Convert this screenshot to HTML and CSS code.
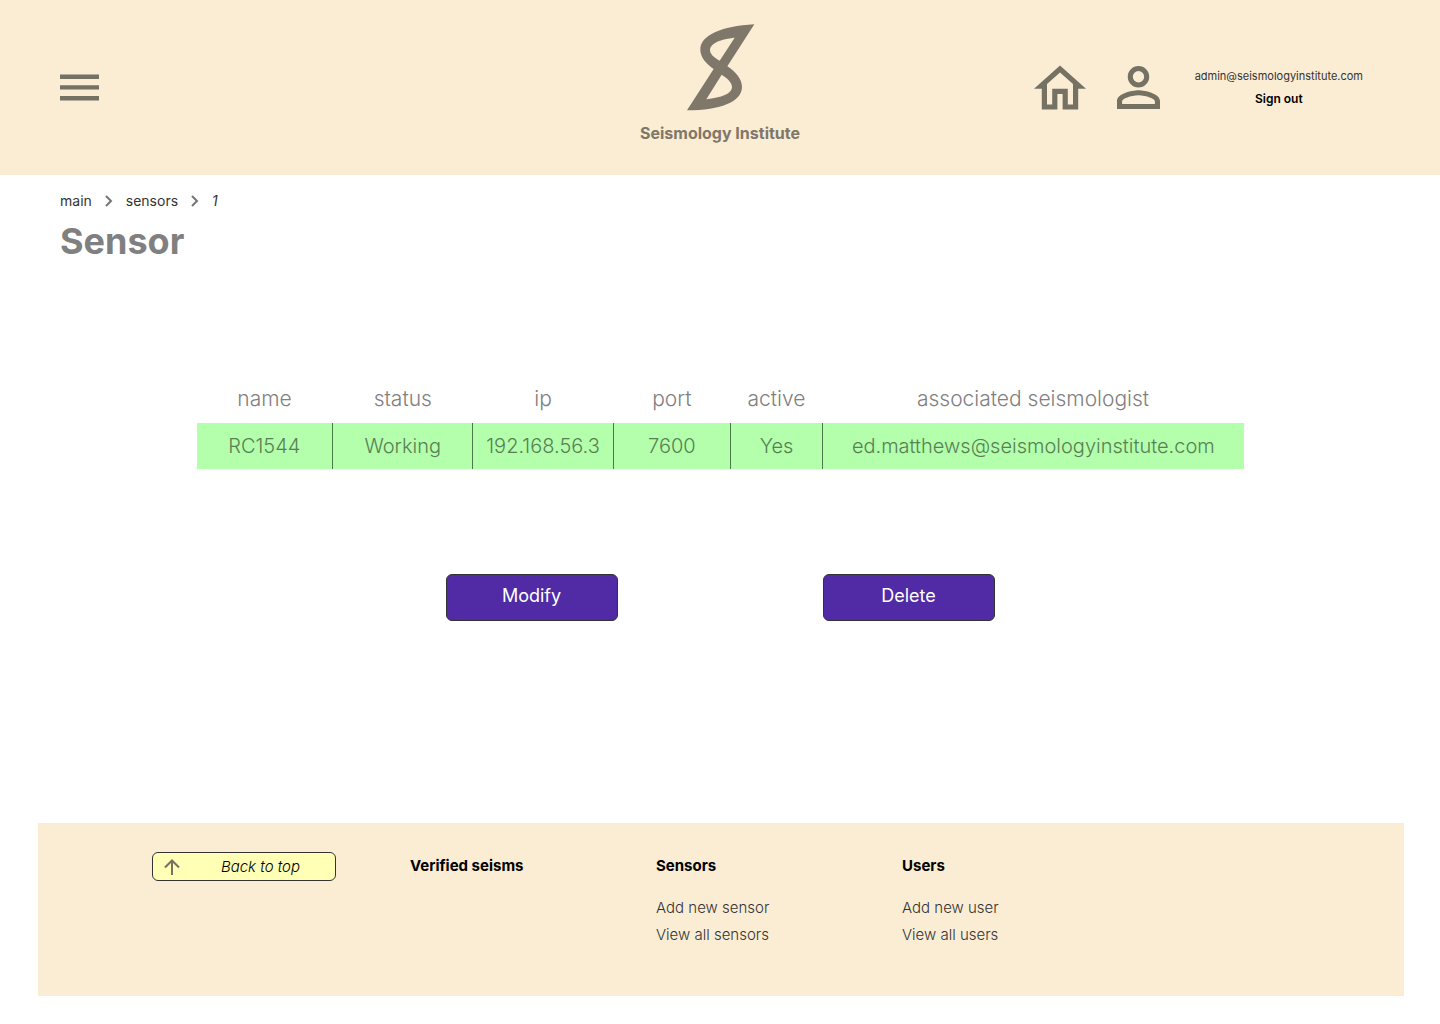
FILE: index.html
```html
<!DOCTYPE html>
<html lang="en">
<head>
<meta charset="utf-8">
<meta name="viewport" content="width=device-width, initial-scale=1">
<title>Sensor – Seismology Institute</title>
<link rel="stylesheet" href="styles.css">
</head>
<body>
<header class="header" id="top">
  <button class="icon-button menu" type="button" aria-label="Menu">
    <svg width="39" height="27" viewBox="0 0 39 27" aria-hidden="true"><path d="M0 0.5h39v4.4H0zM0 11.2h39v4.4H0zM0 22h39v4.4H0z"/></svg>
  </button>
  <a class="brand" href="#">
    <svg class="brand-mark" width="72" height="90" viewBox="188 40 216 270" aria-hidden="true">
      <path fill-rule="evenodd" d="M399 44C300 50 237 77 237 120C237 142 254 162 277 178L197 302C300 302 362 275 362 232C362 208 342 186 318 170ZM340 84C300 88 266 100 266 122C266 133 278 144 295 153ZM301 195C318 206 332 218 332 233C332 252 300 264 255 269Z"/>
    </svg>
    <span class="brand-name">Seismology Institute</span>
  </a>
  <div class="account">
    <a class="icon-link" href="#" aria-label="Home">
      <svg width="52" height="45" viewBox="2 3 20 17" aria-hidden="true"><path d="M12 5.69l5 4.5V18h-2v-6H9v6H7v-7.81l5-4.5M12 3L2 12h3v8h6v-6h2v6h6v-8h3L12 3z"/></svg>
    </a>
    <a class="icon-link" href="#" aria-label="Profile">
      <svg width="43" height="43" viewBox="4 4 16 16" aria-hidden="true"><path d="M12 5.9a2.1 2.1 0 1 1 0 4.2 2.1 2.1 0 0 1 0-4.2m0 9c2.97 0 6.1 1.46 6.1 2.1v1.1H5.9V17c0-.64 3.13-2.1 6.1-2.1M12 4C9.79 4 8 5.79 8 8s1.79 4 4 4 4-1.79 4-4-1.79-4-4-4zm0 9c-2.67 0-8 1.34-8 4v3h16v-3c0-2.66-5.33-4-8-4z"/></svg>
    </a>
    <div class="user">
      <span class="user-email">admin@seismologyinstitute.com</span>
      <a class="sign-out" href="#">Sign out</a>
    </div>
  </div>
</header>

<main class="main">
  <nav class="breadcrumbs" aria-label="Breadcrumb">
    <a href="#">main</a>
    <svg width="8" height="12" viewBox="0 0 8 12" aria-hidden="true"><path d="M1 1l5 5-5 5"/></svg>
    <a href="#">sensors</a>
    <svg width="8" height="12" viewBox="0 0 8 12" aria-hidden="true"><path d="M1 1l5 5-5 5"/></svg>
    <em>1</em>
  </nav>
  <h1 class="title">Sensor</h1>

  <table class="sensor">
    <colgroup>
      <col class="col-name"><col class="col-status"><col class="col-ip"><col class="col-port"><col class="col-active"><col class="col-owner">
    </colgroup>
    <thead>
      <tr><th scope="col">name</th><th scope="col">status</th><th scope="col">ip</th><th scope="col">port</th><th scope="col">active</th><th scope="col">associated seismologist</th></tr>
    </thead>
    <tbody>
      <tr><td>RC1544</td><td>Working</td><td>192.168.56.3</td><td>7600</td><td>Yes</td><td>ed.matthews@seismologyinstitute.com</td></tr>
    </tbody>
  </table>

  <div class="actions">
    <button class="action" type="button">Modify</button>
    <button class="action" type="button">Delete</button>
  </div>
</main>

<footer class="footer">
  <div>
    <a class="back-to-top" href="#top">
      <svg width="16" height="16" viewBox="0 0 16 16" aria-hidden="true"><path d="M8 16V1.500M1 8.500l7-7 7 7"/></svg>
      <span>Back to top</span>
    </a>
  </div>
  <section>
    <h2><a href="#">Verified seisms</a></h2>
  </section>
  <section>
    <h2>Sensors</h2>
    <ul>
      <li><a href="#">Add new sensor</a></li>
      <li><a href="#">View all sensors</a></li>
    </ul>
  </section>
  <section>
    <h2>Users</h2>
    <ul>
      <li><a href="#">Add new user</a></li>
      <li><a href="#">View all users</a></li>
    </ul>
  </section>
</footer>
</body>
</html>
```
FILE: styles.css
```css
* {
  box-sizing: border-box;
}

body {
  margin: 0;
  background: #fff;
  color: #000;
  font-family: Inter, "Open Sans", sans-serif;
  font-size: 15px;
}

a {
  color: inherit;
  text-decoration: none;
}

svg {
  display: block;
  flex: none;
}

.header {
  display: grid;
  grid-template-columns: 1fr auto 1fr;
  align-items: center;
  min-height: 175px;
  padding: 0 60px;
  background: #faedd4;
}

.icon-button {
  justify-self: start;
  padding: 0;
  border: 0;
  background: none;
  cursor: pointer;
}

.icon-button svg,
.icon-link svg {
  fill: #757264;
}

.brand {
  display: flex;
  flex-direction: column;
  align-items: center;
  gap: 10px;
  padding-bottom: 9px;
  color: #7f7769;
}

.brand-mark {
  fill: currentColor;
}

.brand-name {
  font-size: 16px;
  font-weight: 700;
  line-height: 20px;
}

.account {
  display: flex;
  align-items: center;
  justify-self: end;
  gap: 31px;
  margin-right: 17px;
}

.user {
  display: flex;
  flex-direction: column;
  align-items: center;
  gap: 7px;
  margin-left: 4px;
  font-size: 11px;
  line-height: 16px;
}

.user-email {
  color: #333;
}

.sign-out {
  font-size: 12px;
  font-weight: 600;
}

.main {
  padding: 16px 60px 0;
}

.breadcrumbs {
  display: flex;
  align-items: center;
  gap: 13px;
  color: #333;
  font-size: 14px;
  line-height: 20px;
}

.breadcrumbs svg {
  fill: none;
  stroke: #757575;
  stroke-width: 2;
}

.title {
  margin: 6px 0 0;
  color: #808080;
  font-size: 36px;
  font-weight: 700;
  line-height: 48px;
}

.sensor {
  width: 100%;
  max-width: 1047px;
  margin: 122px auto 0;
  border-collapse: collapse;
  table-layout: fixed;
  font-size: 20px;
  line-height: 24px;
}

.col-name { width: 13%; }
.col-status { width: 13.4%; }
.col-ip { width: 13.4%; }
.col-port { width: 11.2%; }
.col-active { width: 8.8%; }
.col-owner { width: 40.2%; }

.sensor th {
  padding: 0 0 12px;
  color: #808080;
  font-size: 21px;
  font-weight: 300;
}

.sensor td {
  height: 46px;
  padding: 0;
  background: #b3ffab;
  color: #598055;
  font-weight: 300;
  text-align: center;
}

.sensor td + td {
  border-left: 1px solid #4a7a48;
}

.actions {
  display: flex;
  flex-wrap: wrap;
  justify-content: center;
  gap: 24px 205px;
  margin-top: 105px;
}

.action {
  width: 172px;
  height: 47px;
  padding: 0 0 4px;
  border: 1px solid #333;
  border-radius: 6px;
  background: #512aa5;
  color: #fff;
  font: 400 18px/24px Inter, "Open Sans", sans-serif;
  cursor: pointer;
}

.footer {
  display: grid;
  grid-template-columns: 258px 246px 246px 1fr;
  min-height: 173px;
  margin: 202px 36px 28px 38px;
  padding: 29px 0 29px 114px;
  background: #faedd4;
}

.back-to-top {
  display: flex;
  align-items: center;
  width: 184px;
  height: 29px;
  padding: 0 11px;
  border: 1px solid #333;
  border-radius: 6px;
  background: #ffffb5;
  font-style: italic;
  font-weight: 300;
}

.back-to-top span {
  flex: 1;
  padding-left: 17px;
  text-align: center;
}

.back-to-top svg {
  fill: none;
  stroke: #757264;
  stroke-width: 2;
}

.footer h2 {
  margin: 0;
  font-size: 15px;
  font-weight: 700;
  line-height: 28px;
}

.footer ul {
  margin: 14px 0 0;
  padding: 0;
  list-style: none;
  color: #333;
  font-weight: 300;
  line-height: 27px;
}
```
